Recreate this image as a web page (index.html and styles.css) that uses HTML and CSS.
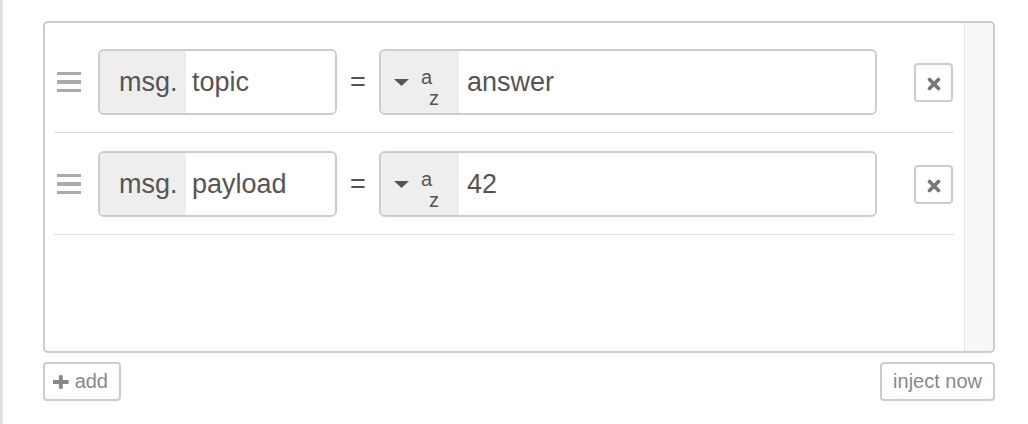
FILE: index.html
```html
<!DOCTYPE html>
<html>
<head>
<meta charset="utf-8">
<link rel="stylesheet" href="styles.css">
</head>
<body>
<div class="strip"></div>
<main class="main">
  <div class="editor">
    <div class="list">
      <div class="row">
        <div class="handle"><span></span><span></span><span></span></div>
        <div class="field">
          <div class="prefix">msg.</div>
          <div class="input">topic</div>
        </div>
        <div class="eq">=</div>
        <div class="value">
          <div class="type">
            <svg class="caret" width="15" height="7" viewBox="0 0 15 7"><path d="M0 0H15L7.5 7Z" fill="#555"/></svg>
            <span class="az"><span class="a">a</span><span class="z">z</span></span>
          </div>
          <div class="input val">answer</div>
        </div>
        <button class="del"><svg width="14" height="14" viewBox="0 0 14 14"><path d="M2.5 2.5L11.5 11.5M11.5 2.5L2.5 11.5" stroke="#777" stroke-width="3.6" stroke-linecap="round"/></svg></button>
      </div>
      <div class="row">
        <div class="handle"><span></span><span></span><span></span></div>
        <div class="field">
          <div class="prefix">msg.</div>
          <div class="input">payload</div>
        </div>
        <div class="eq">=</div>
        <div class="value">
          <div class="type">
            <svg class="caret" width="15" height="7" viewBox="0 0 15 7"><path d="M0 0H15L7.5 7Z" fill="#555"/></svg>
            <span class="az"><span class="a">a</span><span class="z">z</span></span>
          </div>
          <div class="input val">42</div>
        </div>
        <button class="del"><svg width="14" height="14" viewBox="0 0 14 14"><path d="M2.5 2.5L11.5 11.5M11.5 2.5L2.5 11.5" stroke="#777" stroke-width="3.6" stroke-linecap="round"/></svg></button>
      </div>
    </div>
    <div class="scroll"></div>
  </div>
  <div class="actions">
    <button class="btn add"><svg width="16" height="14" viewBox="0 0 16 14"><path d="M6 0h4v5h6v4h-6v5H6V9H0V5h6z" fill="#888"/></svg><span>add</span></button>
    <button class="btn">inject now</button>
  </div>
</main>
</body>
</html>
```
FILE: styles.css
```css
html, body {
  margin: 0;
  padding: 0;
  background: #fff;
  height: 424px;
  overflow: hidden;
}
body {
  display: flex;
  font-family: "Liberation Sans", Arial, sans-serif;
  color: #555;
}
.strip {
  width: 3px;
  height: 424px;
  background: linear-gradient(to right, #dcdcdc, #e8e8e8);
  flex: none;
}
.main {
  margin-left: 40px;
  padding-top: 21px;
  width: 952px;
}
.editor {
  box-sizing: border-box;
  height: 332px;
  border: 2px solid #ccc;
  border-radius: 5px;
  display: flex;
  overflow: hidden;
}
.list {
  flex: 1;
  padding-top: 8px;
}
.scroll {
  width: 28px;
  border-left: 1px solid #e4e4e4;
  background: #f7f7f7;
}
.row {
  display: flex;
  align-items: center;
  margin: 0 10px 0 9px;
  padding: 18px 1px 17px 3px;
  border-bottom: 1px solid #ddd;
}
.handle {
  width: 24px;
  display: flex;
  flex-direction: column;
  gap: 5px;
  margin-right: 17px;
}
.handle span {
  display: block;
  height: 3.4px;
  background: #aaa;
}
.field, .value {
  box-sizing: border-box;
  height: 66px;
  border: 2px solid #ccc;
  border-radius: 6px;
  display: flex;
  overflow: hidden;
  font-size: 27px;
}
.field { width: 239px; }
.value { width: 498px; }
.prefix {
  width: 86px;
  box-sizing: border-box;
  padding-left: 19px;
  background: #eee;
  display: flex;
  align-items: center;
}
.input {
  flex: 1;
  display: flex;
  align-items: center;
  padding-left: 6px;
  background: #fff;
}
.input.val { padding-left: 8px; }
.eq {
  width: 42px;
  text-align: center;
  font-size: 27px;
}
.type {
  width: 78px;
  box-sizing: border-box;
  background: #eee;
  display: flex;
  align-items: center;
  padding-left: 13px;
}
.caret { flex: none; }
.az {
  display: flex;
  flex-direction: column;
  font-size: 20px;
  line-height: 20px;
  margin-left: 12px;
  padding-top: 11px;
}
.az .z {
  margin-left: 8px;
  margin-top: 1px;
}
.del {
  box-sizing: border-box;
  width: 39px;
  height: 39px;
  margin-left: 37px;
  border: 2px solid #ccc;
  border-radius: 4px;
  background: #fff;
  padding: 0;
  display: flex;
  align-items: center;
  justify-content: center;
}
.del svg { margin-top: 3px; }
.actions {
  display: flex;
  justify-content: space-between;
  margin-top: 9px;
}
.btn {
  box-sizing: border-box;
  height: 39px;
  border: 2px solid #ccc;
  border-radius: 4px;
  background: #fff;
  color: #888;
  font-family: "Liberation Sans", Arial, sans-serif;
  font-size: 20px;
  padding: 0 11px;
  display: flex;
  align-items: center;
}
.btn.add {
  width: 78px;
  padding-left: 8px;
  gap: 6px;
}
```
